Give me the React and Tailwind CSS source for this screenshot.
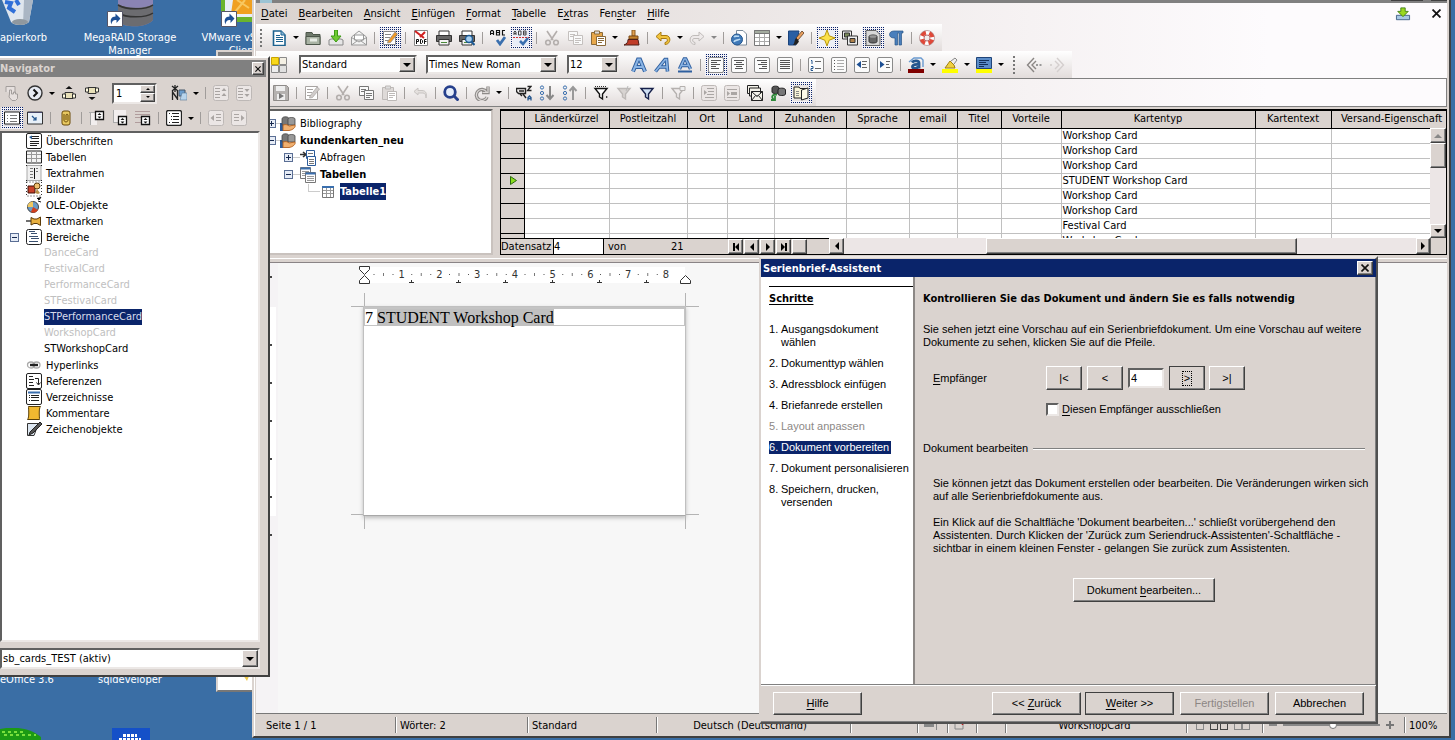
import React from "react";

const RAISED =
  "border border-t-white border-l-white border-r-[#404040] border-b-[#404040] bg-[#dad3cf] shadow-[inset_-1px_-1px_0_#808080]";
const SUNKEN =
  "border-2 border-t-[#606060] border-l-[#606060] border-r-[#ece8e6] border-b-[#ece8e6] bg-white";

/* ---------- icons ---------- */

const box = <rect x=".5" y=".5" width="15" height="15" rx="1.5" fill="#fbfbfb" stroke="#8a8a8a" />;
const boxDim = <rect x=".5" y=".5" width="15" height="15" rx="2" fill="#ebe6e5" stroke="#bdb8b6" />;
const lines = (color, rows) =>
  rows.map(([x1, x2, y], i) => <path key={i} d={`M${x1} ${y}.5H${x2}`} stroke={color} />);
const scissors = (c) => (
  <g fill="none" stroke={c} strokeWidth="1.6">
    <path d="M3 1l6 9M13 1L7 10" />
    <circle cx="4" cy="12.500" r="2.300" />
    <circle cx="12" cy="12.500" r="2.300" />
  </g>
);
const copy = (c) => (
  <g fill="#fafafa" stroke={c}>
    <path d="M1.500 1.500h9v9h-9z" />
    <path d="M3 4.500h5M3 6.500h4" />
    <path d="M6.500 5.500h9v9h-9z" />
    <path d="M8 8.500h6M8 10.500h6M8 12.500h4" />
  </g>
);
const funnel = (fill, stroke) => <path d="M2 3.500h12L9.500 9v5l-3-2V9z" fill={fill} stroke={stroke} strokeWidth="1.400" />;
const pageWithPencil = (c, p) => (
  <g>
    <path d="M1.500 1.500h12v13h-12z" fill="#fff" stroke={c} />
    {lines(c, [[3, 9, 4], [3, 8, 7], [3, 7, 10]])}
    <path d="M6 11l7-9 2.500 2-7 8.500L5.500 13z" fill={p} stroke={c} strokeWidth=".7" />
  </g>
);
const printer = (
  <g>
    <path d="M3 1h10v5H3z" fill="#fff" stroke="#333" />
    <path d="M.5 5.500h15v6H.5z" fill="#666" stroke="#333" />
    <path d="M3 9.500h10v5.500H3z" fill="#f4f4f4" stroke="#333" />
    <path d="M5 12.500h6" stroke="#4a8a3a" />
  </g>
);
const letterA = (extra) => (
  <g fill="none" stroke="#2f5f9f">
    {extra}
  </g>
);
const clipboard = (body, c) => (
  <g>
    <path d="M1.500 2.500h11v12h-11z" fill={body} stroke={c} />
    <path d="M4.500 1h5v3h-5z" fill="#ddd" stroke={c} />
    <path d="M6.500 6.500h9v9h-9z" fill="#fff" stroke={c} />
    {lines(c, [[8, 14, 8], [8, 14, 10], [8, 12, 12]])}
  </g>
);
const handBase = (
  <g>
    <path d="M0 7h3v8H0z" fill="#2d5c9a" />
    <path d="M2 3c0-3 7-3 7 0v6H2z" fill="#777" stroke="#444" strokeWidth=".8" />
    <path d="M8 3c0-2 7-2 7 0v6H8z" fill="#999" stroke="#444" strokeWidth=".8" />
    <path d="M3 9c3-1 5 0 6 1l6-1c1 2-2 5-6 5.500H3z" fill="#f0b070" stroke="#b06020" strokeWidth=".9" />
  </g>
);

const ICONS = {
  newDoc: (
    <g>
      <path d="M2.500 1H10l4 4v10.500H2.500z" fill="#fff" stroke="#1d6390" strokeWidth="1.600" />
      <path d="M10 1v4h4" fill="#88b8d8" stroke="#1d6390" />
      {lines("#1d6390", [[5, 9, 5], [5, 12, 7], [5, 12, 9], [5, 12, 11]])}
    </g>
  ),
  open: (
    <g>
      <path d="M1 2.500h6l1 2h7v10H1z" fill="#6f7a6c" stroke="#4c564a" />
      <path d="M1 6.500h14v8H1z" fill="#a9b3a4" stroke="#4c564a" />
      <path d="M5 8.500h7v3H5z" fill="#e8ece6" />
    </g>
  ),
  save: (
    <g>
      <path d="M1 10v5h14v-5l-2-1H3z" fill="#e6e6e6" stroke="#888" />
      <path d="M6.500 0h3v6H13l-5 6-5-6h3.500z" fill="#6fca32" stroke="#3d9a16" />
    </g>
  ),
  mail: (
    <g fill="#f2f2f2" stroke="#9a9a9a">
      <path d="M.5 7L8 1l7.500 6v8H.5z" />
      <path d="M3.500 5h9v5h-9z" fill="#fff" />
      <path d="M.5 7.500L8 12l7.500-4.500M.5 15L6 11M15.500 15L10 11" fill="none" />
    </g>
  ),
  edit: pageWithPencil("#888", "#f09a28"),
  editDim: pageWithPencil("#a8a4a2", "#d0ccca"),
  pdf: (
    <g>
      <path d="M1.500.5h13v15h-13z" fill="#fff" stroke="#888" />
      <path d="M2 1l9 7M12 2L7 7" stroke="#d02020" strokeWidth="2" />
      <path d="M3.500 14V9.500h2v2h-2M7.500 9.500h1l1 1v2l-1 1h-1zM11.500 14V9.500h2M11.500 11.500h2" fill="none" stroke="#111" />
    </g>
  ),
  print: printer,
  preview: (
    <g>
      {printer}
      <circle cx="10" cy="9" r="3.500" fill="#a8d0f0" stroke="#1d5a94" strokeWidth="1.400" />
      <path d="M12.500 11.500L15.500 15" stroke="#1d5a94" strokeWidth="2" />
    </g>
  ),
  abc: (
    <g fill="none">
      <path d="M.5 5V1.500l1-1h1l1 1V5M.5 3.500h3M6.500.5V5h3V.5zM6.500 2.500h3M15 .5h-2.500V5H15" stroke="#111" strokeWidth="1.200" />
      <path d="M7 10l3 4 5-7" stroke="#3a6fae" strokeWidth="2.800" />
    </g>
  ),
  abcAuto: (
    <g fill="none">
      <rect width="16" height="16" fill="#e9edf7" />
      <path d="M1 5V2l1-1 1 1v3M1 3.500h2M5.500 1v4h2.500V1zM10.500 1v4H13V1zM10.500 3H13" stroke="#444" />
      <path d="M0 7.500h16" stroke="#d03030" strokeDasharray="2 1" />
      <path d="M7 11l3 3 5-6" stroke="#3a6fae" strokeWidth="2.600" />
    </g>
  ),
  cut: scissors("#b3aeac"),
  copyDim: copy("#c4c0be"),
  copy: copy("#777"),
  paste: clipboard("#e8a84a", "#8a6a3a"),
  pasteDim: clipboard("#dedad8", "#bdb9b7"),
  brush: (
    <g>
      <path d="M8 0h3v6H8z" fill="#e0a050" stroke="#8a5a20" />
      <path d="M5 6h9v3H5z" fill="#c8842c" stroke="#7a4a18" />
      <path d="M4 9.500h10L15 15H0c3-1 4-3 4-5.500z" fill="#c03c28" stroke="#502018" />
    </g>
  ),
  undo: <path d="M6 2L1 6.500 6 11V8.500h5c2 0 2 4-1 4v2c6 0 6.500-9 1-9H6z" fill="#f2c43c" stroke="#a87a10" />,
  redo: <path d="M10 2l5 4.500-5 4.500V8.500H5c-2 0-2 4 1 4v2c-6 0-6.500-9-1-9h5z" fill="#eeeaea" stroke="#c0bcba" />,
  undoDim: <path d="M6 3L2 6.500 6 10V8h5c2 0 3 2 3 5 1-4 0-7.500-4-7.500H6z" fill="#e4e0de" stroke="#c8c4c2" />,
  link: (
    <g>
      <path d="M5.500.5H12L15.500 4v11h-10z" fill="#fff" stroke="#7a8a9a" />
      <circle cx="6" cy="9.500" r="5.500" fill="#3f79b8" stroke="#24568e" />
      <path d="M3 7c2-2 3 0 5-1M3 12c1-3 4-1 6-3" stroke="#bcdcf4" strokeWidth="1.600" fill="none" />
    </g>
  ),
  table: (
    <g>
      <path d="M.5.5h15v15H.5z" fill="#fff" stroke="#777" />
      <path d="M.5.5h15v3H.5z" fill="#a4aca0" stroke="#777" />
      <path d="M1 7.500h14M1 11.500h14M5.500 4v11M10.500 4v11" stroke="#aaa" />
    </g>
  ),
  draw: (
    <g>
      <path d="M.5 1H11L8 15H.5z" fill="#2a5fa4" stroke="#1c447c" />
      <path d="M14 1l2 2-6 7-2-2z" fill="#e8a060" stroke="#5a3a20" strokeWidth=".8" />
      <path d="M8 8l3 3c-1 3-3 4-6 4 2-2 1-5 3-7z" fill="#222" />
    </g>
  ),
  star: (
    <g>
      <rect width="16" height="16" fill="#eef0f6" />
      <path d="M8 0l2.200 5.800L16 8l-5.800 2.200L8 16l-2.200-5.800L0 8l5.800-2.200z" fill="#fbe14a" stroke="#b8960c" />
    </g>
  ),
  gallery: (
    <g stroke="#333">
      <path d="M.5 1h9v8h-9z" fill="#eee" />
      <path d="M2.500 3h5v4h-5z" fill="#7a8a5a" />
      <path d="M5.500 6h10v9h-10z" fill="#eee" />
      <path d="M8 8.500h5v4H8z" fill="#b0824a" />
    </g>
  ),
  dataSrc: (
    <g>
      <path d="M1 .5h10l4 4v11H1z" fill="#d8d8d8" stroke="#666" />
      <path d="M4 6.500c0-2 8-2 8 0v5c0 2-8 2-8 0z" fill="#666" stroke="#333" />
      <ellipse cx="8" cy="6.500" rx="3.500" ry="1.300" fill="#999" />
    </g>
  ),
  pilcrow: <path d="M15 1H6C0 1 0 8 6 8h1v7h2.500V3H11v12h2.500V3H15z" fill="#4a7fbc" stroke="#2a5688" strokeWidth=".7" />,
  help: (
    <g fill="none">
      <circle cx="8" cy="8" r="5.500" stroke="#fff" strokeWidth="4.500" />
      <circle cx="8" cy="8" r="5.500" stroke="#e04838" strokeWidth="4" strokeDasharray="5 3.640" strokeDashoffset="-1.800" />
      <circle cx="8" cy="8" r="7.500" stroke="#a88080" strokeWidth=".7" />
      <circle cx="8" cy="8" r="3" stroke="#a85050" strokeWidth=".8" />
    </g>
  ),
  styles: (
    <g stroke="#8a8a8a">
      <path d="M.5.500h7v7h-7z" fill="#f8d81c" stroke="#c8a400" />
      <path d="M8.500.500h7v7h-7z" fill="#f4f0e4" />
      <path d="M.5 8.500h7v7h-7z" fill="#eee" />
      <path d="M8.500 8.500h7v7h-7z" fill="#e0e0e0" />
    </g>
  ),
  bold: letterA(
    <g>
      <path d="M2 14.500L7 2.500h2l5 12M4.500 10h7" strokeWidth="4" />
      <path d="M2 14.500L7 2.500h2l5 12M4.500 10h7" stroke="#8ab4e4" strokeWidth="2" />
    </g>,
  ),
  italic: letterA(
    <g>
      <path d="M1.500 14.500L11 2.500h1.500l1 12M5 10h8" strokeWidth="3.600" />
      <path d="M1.500 14.500L11 2.500h1.500l1 12M5 10h8" stroke="#8ab4e4" strokeWidth="1.700" />
    </g>,
  ),
  underline: letterA(
    <g>
      <path d="M2.500 12L7.200 2h1.600l4.700 10M4.500 8.500h7" strokeWidth="3.400" />
      <path d="M2.500 12L7.200 2h1.600l4.700 10M4.500 8.500h7" stroke="#8ab4e4" strokeWidth="1.600" />
      <path d="M1 14.500h14" strokeWidth="2" />
    </g>,
  ),
  alignL: <g>{box}{lines("#555", [[3, 13, 3], [3, 9, 5], [3, 12, 7], [3, 8, 9], [3, 11, 11]])}</g>,
  alignC: <g>{box}{lines("#555", [[3, 13, 3], [5, 11, 5], [3, 13, 7], [5, 11, 9], [4, 12, 11]])}</g>,
  alignR: <g>{box}{lines("#555", [[3, 13, 3], [7, 13, 5], [4, 13, 7], [8, 13, 9], [5, 13, 11]])}</g>,
  alignJ: <g>{box}{lines("#555", [[3, 13, 3], [3, 13, 5], [3, 13, 7], [3, 13, 9], [3, 13, 11]])}</g>,
  numList: <g>{box}{lines("#666", [[7, 13, 4], [7, 13, 11]])}<path d="M3 3.500h1V7M3 9.500h2v2H3v2h2" fill="none" stroke="#24568e" /></g>,
  bulList: <g>{box}{lines("#aaa", [[6, 13, 3], [6, 13, 6], [6, 13, 9], [6, 13, 12]])}{lines("#555", [[3, 4, 3], [3, 4, 6], [3, 4, 9], [3, 4, 12]])}</g>,
  outdent: <g>{box}<path d="M7 4v7L2.500 7.500z" fill="#1d4f94" />{lines("#666", [[8, 13, 4], [8, 12, 7], [8, 13, 10]])}</g>,
  indent: <g>{box}<path d="M3 4v7l4.500-3.500z" fill="#1d4f94" />{lines("#666", [[9, 13, 4], [9, 12, 7], [9, 13, 10]])}</g>,
  fontColor: (
    <g>
      <path d="M4 5.500C6 3 11 3.500 11 6v5.500M11 7.500C5 7 3.500 9 5 11c2 1 5 0 6-2" fill="none" stroke="#24568e" strokeWidth="2.800" />
      <path d="M1 5L6 1h7l2 2v7" fill="none" stroke="#6a9ad0" strokeWidth="1.400" />
      <path d="M0 12h16v4H0z" fill="#800000" />
    </g>
  ),
  highlight: (
    <g>
      <path d="M3 11l5-7 4 4 1 3z" fill="#f0d040" stroke="#a08010" />
      <path d="M9 4l4-3 2 2-3 4" fill="#eee" stroke="#888" />
      <path d="M0 12h16v4H0z" fill="#ffff00" />
    </g>
  ),
  paraColor: (
    <g>
      <path d="M.5.5h15v11H.5z" fill="#5a8cc8" stroke="#1f4478" />
      {lines("#10305c", [[3, 13, 3], [3, 10, 5], [3, 12, 7], [3, 8, 9]])}
      <path d="M0 12h16v4H0z" fill="#ffff00" />
    </g>
  ),
  back: <g><path d="M8 1L1.500 8 8 15M10 4L6 8l4 4" fill="none" stroke="#8a8684" strokeWidth="1.400" /><path d="M10 7h2v2h-2zM13.500 7h2v2h-2z" fill="#999" /></g>,
  fwd: <g><path d="M8 1l6.500 7L8 15M6 4l4 4-4 4" fill="none" stroke="#d4cfce" strokeWidth="1.400" /><path d="M1 7h2v2H1z" fill="#d8d4d2" /></g>,
  diskDim: (
    <g>
      <path d="M.5.5h13l2 2v13H.5z" fill="#b5b2b0" stroke="#8e8b89" />
      <path d="M3 1h9v5H3zM4 9h8v6H4z" fill="#eee" />
      <path d="M6 8l5 3-5 3z" fill="#777" />
    </g>
  ),
  find: (
    <g fill="none">
      <circle cx="7" cy="7" r="5.300" fill="#e6eefa" stroke="#26408c" strokeWidth="2.800" />
      <path d="M11 11l4.500 4.500" stroke="#26408c" strokeWidth="3" />
    </g>
  ),
  refresh: (
    <g fill="none">
      <path d="M14 1.500v6H8M12.500 7A5.500 5.500 0 1 0 13 12" stroke="#8e8b89" strokeWidth="3.400" />
      <path d="M14 2v5.500H8.500M12.500 7A5.500 5.500 0 1 0 13 12" stroke="#dedad8" strokeWidth="1.200" />
    </g>
  ),
  sort: (
    <g fill="none" stroke="#222">
      <path d="M.5 3.500h9v5h-7l-2-2zM3 6h5M7 9l3 4M4 9l2 2" strokeWidth="1.400" />
      <path d="M11.500 1.500h3.500l-3.500 4h4" strokeWidth="1.300" />
      <path d="M12 15.500v-3l1.500-1.500 1.500 1.500v3M12 13.500h3" stroke="#24568e" strokeWidth="1.300" />
    </g>
  ),
  sortAsc: <g fill="none"><circle cx="3" cy="2.500" r="1.600" stroke="#3a6fae" /><circle cx="3" cy="8" r="1.600" stroke="#3a6fae" /><circle cx="3" cy="13.500" r="1.600" stroke="#3a6fae" /><path d="M11 1v12M7.500 10l3.500 4 3.500-4" stroke="#888" strokeWidth="2" /></g>,
  sortDesc: <g fill="none"><circle cx="3" cy="2.500" r="1.600" stroke="#3a6fae" /><circle cx="3" cy="8" r="1.600" stroke="#3a6fae" /><circle cx="3" cy="13.500" r="1.600" stroke="#3a6fae" /><path d="M11 15V3M7.500 6L11 2l3.500 4" stroke="#999" strokeWidth="2" /></g>,
  autoFilter: <g>{funnel("#fff", "#111")}<path d="M2 1.500h11" stroke="#333" strokeDasharray="1 1" /><path d="M13 11l2 1-2 1z" fill="#111" /></g>,
  applyFilter: <g>{funnel("#d8d4d2", "#bdb9b7")}<path d="M12 1l-2 5" stroke="#bbb" /></g>,
  stdFilter: funnel("#cfe0f4", "#16204a"),
  noFilter: <g>{funnel("#f2eeee", "#b5b1af")}<path d="M10 1.500h5v4h-5z" fill="#eee" stroke="#b5b1af" /></g>,
  dataText: <g>{boxDim}{lines("#aaa6a4", [[6, 13, 3], [7, 13, 6], [6, 13, 9], [4, 13, 12]])}<path d="M3 5l3 2.500L3 10z" fill="#aaa6a4" /></g>,
  dataField: <g>{boxDim}{lines("#aaa6a4", [[3, 13, 4], [3, 13, 12]])}<path d="M3 6l3 2.500L3 11zM7 7h6v3H7z" fill="#aaa6a4" /></g>,
  mailMerge: (
    <g fill="#f5f3ea" stroke="#222">
      <path d="M.5.5h11v8H.500z" />
      <path d="M2.500 3h11v8h-11z" />
      <path d="M4.500 6.500h11v9h-11zM4.500 6.500l5.500 5 5.500-5M4.500 15.500l4-5M15.500 15.500l-4-5" />
    </g>
  ),
  docSource: (
    <g>
      <path d="M2 3c0-2.500 7-2.500 7 0v4c0 2-7 2-7 0z" fill="#555" stroke="#222" />
      <path d="M8 5c0-2.500 7.500-2.500 7.500 0v4c0 2-7.500 2-7.500 0z" fill="#777" stroke="#222" />
      <path d="M7 9.500c-5 0-6 2-3.500 5M1 15h4v-4" fill="none" stroke="#2f8a3a" strokeWidth="1.800" />
    </g>
  ),
  explorer: (
    <g>
      <rect width="16" height="16" fill="#e8e4e2" />
      <path d="M1 2h5l1 1.500h7V13H1z" fill="#f8f4d8" stroke="#222" />
      <path d="M8.500 5l6.500-2v10l-6.500 2z" fill="#fffbe8" stroke="#222" />
      {lines("#888", [[3, 6, 6], [3, 6, 8], [3, 6, 10]])}
    </g>
  ),
  hand: <path d="M2 7V1.500h9V8M5.500 9V5h2v4h2V7h2v2h2v4.500l-2 2H8L5 12z" fill="#e6e0de" stroke="#a39e9c" />,
  navCircle: <g><circle cx="8" cy="8" r="7" fill="#e6eaf2" stroke="#333" strokeWidth="1.400" /><path d="M6.500 4.500L10 8l-3.500 3.500" fill="none" stroke="#111" strokeWidth="2" /></g>,
  prev: <g><path d="M4.500 4L8 1l3.500 3z" fill="#111" /><path d="M4 7.500h8v6H4z" fill="#e8e0b8" stroke="#333" /><path d="M1.500 9h3v4h-3zM11.500 9h3v4h-3z" fill="#fffbe0" stroke="#333" /></g>,
  next: <g><path d="M4.500 12L8 15l3.500-3z" fill="#111" /><path d="M4 2.500h8v6H4z" fill="#e8e0b8" stroke="#333" /><path d="M1.500 3h3v4h-3zM11.500 3h3v4h-3z" fill="#fffbe0" stroke="#333" /></g>,
  drag: (
    <g>
      <path d="M1.500 6v9M6.500 6v9M1.500 7l5 7M1 1l6 5M7 1L1 6M4 0v7" stroke="#222" strokeWidth="1.300" />
      <path d="M8 5h6v6H8z" fill="#6a9ccc" stroke="#456" />
      <path d="M11 8h5v7h-7z" fill="#b8d4ec" stroke="#579" strokeWidth=".6" />
    </g>
  ),
  levelUp: <g>{boxDim}{lines("#a8a3a1", [[2, 7, 3], [2, 7, 6], [2, 7, 9], [2, 7, 12]])}<path d="M8.500 6h5L11 3zM8.500 11h5L11 8z" fill="#a8a3a1" /></g>,
  levelDown: <g>{boxDim}{lines("#a8a3a1", [[2, 7, 3], [2, 7, 6], [2, 7, 9], [2, 7, 12]])}<path d="M8.500 4h5L11 7zM8.500 9h5L11 12z" fill="#a8a3a1" /></g>,
  listBox: <g><rect width="16" height="16" fill="#dad8dc" /><path d="M.5 2h15v12H.5z" fill="#fff" stroke="#222" />{lines("#777", [[3, 4, 5], [6, 13, 5], [3, 4, 8], [6, 13, 8], [3, 4, 11], [6, 13, 11]])}</g>,
  content: <g><path d="M.5 2h15v12H.5z" fill="#e8f0f8" stroke="#333" /><path d="M1 2.500h14" stroke="#446" /><path d="M5 6l4 4M9 7v3H6" fill="none" stroke="#24568e" strokeWidth="1.200" /></g>,
  reminder: <g><rect x="4" y="1" width="8" height="14" rx="2" fill="#e8c860" stroke="#6a4a08" /><path d="M6 4v6c0 2.500 4 2.500 4 0V5c0-1-2-1-2 0v5" fill="none" stroke="#6a4a08" /></g>,
  header: <g><path d="M1 3h7v12H1z" fill="#f2eeee" /><path d="M0 2.500h8M1.500 3v12" stroke="#aaa" /><path d="M6.500 1.500h8v8h-8z" fill="#fff" stroke="#111" strokeWidth="1.300" /><path d="M8.500 5h4L10.500 3zM8.500 6.500h4l-2 2z" fill="#111" /></g>,
  footer: <g><path d="M1 0h13v12H1z" fill="#f2eeee" /><path d="M1.500 0v12M1 12.500h6" stroke="#aaa" /><path d="M6.500 6.500h8v8h-8z" fill="#fff" stroke="#111" strokeWidth="1.300" /><path d="M8.500 10h4l-2-2zM8.500 11.500h4l-2 2z" fill="#111" /></g>,
  anchor: <g>{lines("#b09c9c", [[0, 15, 1], [0, 15, 4], [0, 6, 7], [0, 6, 12]])}<path d="M6.500 6.500h8v8h-8z" fill="#fff" stroke="#111" strokeWidth="1.300" /><path d="M8.500 10h4l-2-2zM8.500 11.500h4l-2 2z" fill="#111" /></g>,
  headings: <g><rect x=".5" y=".5" width="15" height="15" rx="2" fill="#fff" stroke="#222" strokeWidth="1.300" />{lines("#222", [[3, 4, 3], [6, 13, 3], [5, 6, 6], [7, 13, 6], [5, 6, 9], [7, 13, 9], [3, 4, 12], [6, 13, 12]])}</g>,
  promote: <g>{boxDim}<path d="M6 5v6L2.500 8z" fill="#aaa5a3" />{lines("#aaa5a3", [[8, 13, 4], [8, 13, 7], [8, 13, 10]])}</g>,
  demote: <g>{boxDim}<path d="M10 5v6l3.500-3z" fill="#aaa5a3" />{lines("#aaa5a3", [[3, 8, 4], [3, 8, 7], [3, 8, 10]])}</g>,
  tHeading: <g><rect x=".5" y=".5" width="15" height="15" rx="1.500" fill="#fff" stroke="#222" /><path d="M3 4l3-1.500v4z" fill="#24568e" />{lines("#222", [[6, 13, 3], [6, 13, 5], [4, 13, 8], [4, 13, 10], [4, 11, 12]])}</g>,
  tTable: <g><path d="M.5 2h15v12H.5z" fill="#f4f4f4" stroke="#222" /><path d="M1 5.500h14M1 9.500h14M5.500 2v12M10.500 2v12" stroke="#999" /></g>,
  tFrame: <g><path d="M1 .5h14v15H1z" fill="#f0f0f0" stroke="#aaa" />{lines("#777", [[4, 7, 3], [4, 7, 6], [4, 7, 9], [4, 7, 12], [10, 12, 3], [10, 12, 6]])}<path d="M8.500 3v11" stroke="#111" /><path d="M0 0h1v1H0zM15 0h1v1h-1zM0 15h1v1H0zM15 15h1v1h-1z" fill="#222" /></g>,
  tImage: <g><path d="M.5 1h15v14H.5z" fill="#fff" stroke="#333" strokeDasharray="1 2" /><path d="M2 5h7v7H2z" fill="#c84028" stroke="#401008" /><circle cx="11" cy="5" r="3" fill="#f0c070" stroke="#604010" /><path d="M11 8l3 4-2 1-3-1z" fill="#b89048" /></g>,
  tOle: <g><circle cx="7" cy="10" r="5.500" fill="#6a9cc8" stroke="#444" /><path d="M7 10V4.500A5.500 5.500 0 0 0 1.500 10z" fill="#f0c860" /><path d="M7 10l5 3a5.500 5.500 0 0 1-7 2z" fill="#d04020" /><path d="M11 1l2 2 2-3M12 4l3 1" stroke="#111" /></g>,
  tPin: <g><path d="M0 8h6" stroke="#333" strokeWidth="1.400" /><path d="M5 4.500l3 1.500h3l3.500-2v8.500l-3.500-2H8L5 12z" fill="#e8b040" stroke="#5a3a08" /></g>,
  tSection: <g><rect x=".5" y=".5" width="15" height="15" rx="2" fill="#fff" stroke="#222" />{lines("#3a5070", [[3, 9, 2], [5, 11, 4], [3, 12, 7], [5, 13, 9], [3, 12, 12]])}</g>,
  tLink: <g fill="none" stroke="#aaa" strokeWidth="1.300"><ellipse cx="5" cy="8" rx="3.500" ry="3" /><ellipse cx="10.500" cy="8" rx="3.500" ry="3" /><path d="M4 8h8" stroke="#222" strokeWidth="2.400" /></g>,
  tRef: <g><rect x=".5" y=".5" width="15" height="15" rx="1.500" fill="#fff" stroke="#222" />{lines("#222", [[3, 7, 3], [3, 8, 6], [3, 7, 9], [3, 8, 12]])}<path d="M9 5.500h3.500v6M10.500 9.500l2 2.500 2-2.500" fill="none" stroke="#222" /></g>,
  tIndex: <g><rect x=".5" y=".5" width="15" height="15" rx="1.500" fill="#fff" stroke="#222" /><path d="M2 3.500h12" stroke="#3a6fae" strokeWidth="2" />{lines("#222", [[3, 4, 6], [5, 13, 6], [3, 4, 8], [5, 13, 8], [3, 4, 11], [5, 13, 11]])}</g>,
  tNote: <g><path d="M2.500 1.500h12c-2 2-1 11-1 13h-12c2-2 1-11 1-13z" fill="#f0b830" stroke="#5a4008" /></g>,
  tDraw: <g><path d="M1.500 2.500h11L8 14.500H1.500z" fill="#dce6f0" stroke="#333" /><path d="M14 1l2 2-9 9-4 2 1-3z" fill="#555" stroke="#222" /></g>,
  base: handBase,
  queries: <g><path d="M0 4.500h5M3 2l3 2.500L3 7" stroke="#333" strokeWidth="1.600" fill="none" /><path d="M6.500.5h8v8h-8z" fill="#fff" stroke="#2d5c9a" /><path d="M7.500 6.500h8v9h-8z" fill="#fff" stroke="#2d5c9a" />{lines("#777", [[8, 13, 3], [9, 14, 9], [9, 14, 11], [9, 14, 13]])}</g>,
  tables: <g><path d="M.5.500h10v11H.5z" fill="#fff" stroke="#777" /><path d="M.5 1.500h10" stroke="#3a6fae" strokeWidth="2" />{lines("#999", [[2, 9, 4], [2, 9, 6], [2, 9, 8]])}<path d="M5.500 5.500h10v10h-10z" fill="#fff" stroke="#777" /><path d="M5.500 6.500h10" stroke="#3a6fae" strokeWidth="2" />{lines("#999", [[7, 14, 9], [7, 14, 11], [7, 14, 13]])}</g>,
  tbl: <g><path d="M2.500 2.500h11v11h-11z" fill="#fff" stroke="#777" /><path d="M2 3h12" stroke="#3a6fae" strokeWidth="2" /><path d="M3 6.500h10M3 9.500h10M6.500 4v9M10.500 4v9" stroke="#999" /></g>,
  update: <g><path d="M.5 9.500h15v5H.5z" fill="#a8c8e4" stroke="#3a5a80" /><path d="M5.500 1h5v4H14l-6 6-6-6h3.500z" fill="#9ad820" stroke="#3a7a10" /></g>,
};

const Icon = ({ name, className = "size-4" }) => (
  <svg viewBox="0 0 16 16" className={`block shrink-0 ${className}`} aria-hidden="true">
    {ICONS[name]}
  </svg>
);

const Triangle = ({ dir = "down", className = "fill-black", size = "h-1 w-2" }) => {
  const d = { down: "M0 0h8L4 4z", up: "M0 4h8L4 0z", left: "M4 0v8L0 4z", right: "M0 0v8l4-4z" }[dir];
  const vertical = dir === "left" || dir === "right";
  return (
    <svg viewBox={vertical ? "0 0 4 8" : "0 0 8 4"} className={`block shrink-0 ${vertical ? "h-2 w-1" : size} ${className}`} aria-hidden="true">
      <path d={d} />
    </svg>
  );
};

/* ---------- toolbar pieces ---------- */

/* Item grammar: "|" separator, "v" drop-down arrow, "V" dimmed arrow, ":" grip, "*name" pressed icon. */
const Tools = ({ items }) =>
  items.map((item, i) => {
    if (item === "|")
      return (
        <span key={i} className="flex w-2 shrink-0 justify-center">
          <span className="h-3 w-px bg-[#a09c9a]" />
        </span>
      );
    if (item === "v" || item === "V")
      return (
        <button key={i} aria-label="Mehr" className="flex h-[22px] w-[11px] shrink-0 items-center justify-center">
          <Triangle size="h-[3px] w-[6px]" className={item === "v" ? "fill-black" : "fill-[#888]"} />
        </button>
      );
    if (item === ":")
      return (
        <span key={i} className="flex w-4 shrink-0 justify-center">
          <span className="h-[18px] border-l-2 border-dotted border-[#777]" />
        </span>
      );
    const pressed = item[0] === "*";
    const name = pressed ? item.slice(1) : item;
    return (
      <button key={i} aria-label={name} aria-pressed={pressed} className="flex h-[22px] w-[23px] shrink-0 items-center justify-center">
        <span
          className={
            pressed
              ? "flex size-[22px] items-center justify-center bg-[conic-gradient(#0a246a_25%,#f4f2f6_0)] bg-[length:2px_2px]"
              : ""
          }
        >
          <Icon name={name} />
        </span>
      </button>
    );
  });

const Combo = ({ label, value, className }) => (
  <div className={`relative shrink-0 ${SUNKEN} ${className}`}>
    <select aria-label={label} defaultValue={value} className="block h-full w-full appearance-none bg-transparent pl-px pr-4 outline-none">
      <option>{value}</option>
    </select>
    <span className={`pointer-events-none absolute inset-y-0 right-0 flex w-4 items-center justify-center ${RAISED}`}>
      <Triangle />
    </span>
  </div>
);

const Key = ({ text, k }) => {
  const i = text.indexOf(k);
  return (
    <span>
      {text.slice(0, i)}
      <span className="underline underline-offset-2">{k}</span>
      {text.slice(i + 1)}
    </span>
  );
};

const CloseX = ({ className = "size-2" }) => (
  <svg viewBox="0 0 8 8" className={`block ${className}`} aria-hidden="true">
    <path d="M.5.500l7 7M7.500.500l-7 7" stroke="#111" strokeWidth="1.600" />
  </svg>
);

/* ---------- desktop ---------- */

const DesktopLabel = ({ children, className = "w-[100px] text-center" }) => (
  <div className={`absolute whitespace-nowrap leading-[13px] text-white ${className}`}>{children}</div>
);

const ShortcutArrow = () => (
  <g>
    <path d="M0 0h15v15H0z" fill="#fff" stroke="#556" />
    <path d="M4 13C2 8 4 5 8 5V2l5 5-4 4.500V8.500C6 8 4 10 4 13z" fill="#1d4f94" />
  </g>
);

const Desktop = () => (
  <>
    <svg className="absolute left-0 top-0 h-[27px] w-[34px]" viewBox="0 0 34 27" aria-hidden="true">
      <path d="M2 0h31l-4 22c-4 4-15 4-18 0z" fill="#dfe6ee" />
      <path d="M24 0h9l-4 22-6 3z" fill="#aab6c4" />
      <path d="M5 2l6 1-2 5 6 4M16 0l3 5" stroke="#2f6fd8" strokeWidth="4" fill="none" />
      <ellipse cx="20" cy="22" rx="8" ry="3" fill="#8f989f" />
    </svg>
    <DesktopLabel className="left-0 top-[31px]">apierkorb</DesktopLabel>
    <svg className="absolute left-[106px] top-0 h-[28px] w-[48px]" viewBox="0 0 48 28" aria-hidden="true">
      <path d="M12 0h35v20c-6 8-28 8-35 2z" fill="#8a84b4" />
      <path d="M12 4c8 5 28 5 35 0v16c-6 8-28 8-35 2z" fill="#6c6c70" />
      <path d="M12 5c8 5 28 5 35 0M12 13c8 5 28 5 35 0" stroke="#333" fill="none" strokeWidth="1.500" />
      <g transform="translate(1.500 11.500)"><ShortcutArrow /></g>
    </svg>
    <DesktopLabel className="left-20 top-[31px] w-[100px] text-center">
      MegaRAID Storage
      <br />
      Manager
    </DesktopLabel>
    <svg className="absolute left-[221px] top-0 h-[28px] w-[34px]" viewBox="0 0 34 28" aria-hidden="true">
      <path d="M0 0h34v22H0z" fill="#6ab42c" />
      <path d="M4 0h30v17H4z" fill="#e8eef4" />
      <path d="M12 0h22v14H10z" fill="#f0a020" />
      <path d="M16 0l12 8M24 0L14 12" stroke="#f8c860" strokeWidth="2" />
      <g transform="translate(.500 11.500)"><ShortcutArrow /></g>
    </svg>
    <DesktopLabel className="left-[193px] top-[31px] w-[100px] text-center">
      VMware vSphere
      <br />
      Client
    </DesktopLabel>
    <div className="absolute bottom-12 left-[216px] top-[50px] flex w-[60px] flex-col border-2 border-[#dad3cf] border-b-[#777] bg-white">
      <div className="h-3 bg-[#808080]" />
      <div className="mt-auto flex justify-center pb-2">
        <svg viewBox="0 0 10 16" className="h-4 w-2.5" aria-hidden="true"><path d="M2 0h6v10l-2 5-4-6z" fill="#f0cc50" /></svg>
      </div>
    </div>
    <DesktopLabel className="left-0 top-[673px]">eOffice 3.6</DesktopLabel>
    <DesktopLabel className="left-20 top-[673px] w-[100px] text-center">sqldeveloper</DesktopLabel>
    <svg className="absolute bottom-0 left-0 h-3 w-[42px]" viewBox="0 0 42 12" aria-hidden="true">
      <path d="M0 1c14-3 30-1 41 8v3H0z" fill="#1c9a14" />
      <path d="M2 4h24M4 7h32" stroke="#7ae03c" strokeDasharray="3 3" strokeWidth="2" />
    </svg>
    <svg className="absolute bottom-0 left-28 h-3 w-[38px]" viewBox="0 0 38 12" aria-hidden="true">
      <path d="M0 0h38v12H0z" fill="#1450c8" />
      <path d="M11 7.500h14M7 11.500h22" stroke="#fff" strokeWidth="3" strokeDasharray="3 1" />
    </svg>
  </>
);

/* ---------- writer window ---------- */

const MENUS = [
  ["Datei", "D"], ["Bearbeiten", "B"], ["Ansicht", "A"], ["Einfügen", "E"], ["Format", "F"],
  ["Tabelle", "T"], ["Extras", "x"], ["Fenster", "s"], ["Hilfe", "H"],
];

const TB_STANDARD = [
  "newDoc", "v", "open", "save", "mail", "|", "*edit", "|", "pdf", "print", "preview", "|", "abc", "*abcAuto", "|",
  "cut", "copyDim", "paste", "v", "brush", "|", "undo", "v", "redo", "V", "|", "link", "table", "v", "draw", "|",
  "*star", "gallery", "*dataSrc", "pilcrow", "|", "help",
];
const TB_FORMAT = [
  "bold", "italic", "underline", "|", "*alignL", "alignC", "alignR", "alignJ", "|", "numList", "bulList", "outdent",
  "indent", "|", "fontColor", "v", "highlight", "v", "paraColor", "v", ":", "back", "fwd",
];
const TB_DATA = [
  "diskDim", "|", "editDim", "|", "cut", "copy", "pasteDim", "|", "undoDim", "|", "find", "|", "refresh", "v", "|",
  "sort", "sortAsc", "sortDesc", "|", "autoFilter", "applyFilter", "stdFilter", "|", "noFilter", "|", "dataText",
  "dataField", "mailMerge", "docSource", "*explorer",
];

const TOOLBAR = "flex h-[27px] w-max items-center bg-linear-to-b from-white to-[#e2dcdb]";

const COLUMNS = [
  ["Länderkürzel", "w-[85px]"], ["Postleitzahl", "w-[78px]"], ["Ort", "w-10"], ["Land", "w-[47px]"],
  ["Zuhanden", "w-[72px]"], ["Sprache", "w-[63px]"], ["email", "w-12"], ["Titel", "w-11"],
  ["Vorteile", "w-[60px]"], ["Kartentyp", "w-[194px]"], ["Kartentext", "w-[76px]"], ["Versand-Eigenschaft", "pl-1.5"],
];
const CARD_TYPES = [
  "Workshop Card", "Workshop Card", "Workshop Card", "STUDENT Workshop Card",
  "Workshop Card", "Workshop Card", "Festival Card", "Workshop Card",
];

const TreeBox = ({ open }) => (
  <svg viewBox="0 0 9 9" className="block size-[9px] shrink-0" aria-hidden="true">
    <rect x=".5" y=".5" width="8" height="8" fill="#e6ecf6" stroke="#5a6e94" />
    <path d={open ? "M2 4.500h5" : "M2 4.500h5M4.500 2v5"} stroke="#16284e" />
  </svg>
);

const SourceTree = () => (
  <div className="flex w-[237px] shrink-0 flex-col border-2 border-t-[#606060] border-b-[#c9c2be] border-r-[#c9c2be] border-l-0 bg-white pl-[11px] pt-1">
    {[["Bibliography", false], ["kundenkarten_neu", true]].map(([label, open]) => (
      <div key={label} className="flex h-[17px] items-center">
        <TreeBox open={open} />
        <span className="h-px w-1 bg-[#ccc]" />
        <Icon name="base" />
        <span className={`pl-1 ${open ? "font-bold" : ""}`}>{label}</span>
      </div>
    ))}
    <div className="flex h-[17px] items-center pl-[17px]">
      <TreeBox />
      <span className="h-px w-[7px] bg-[#ccc]" />
      <Icon name="queries" />
      <span className="pl-1">Abfragen</span>
    </div>
    <div className="flex h-[17px] items-center pl-[17px]">
      <TreeBox open />
      <span className="h-px w-[7px] bg-[#ccc]" />
      <Icon name="tables" />
      <span className="pl-1 font-bold">Tabellen</span>
    </div>
    <div className="flex h-[17px] items-center pl-[41px]">
      <span className="mb-2 h-2 w-3 border-b border-l border-[#ccc]" />
      <Icon name="tbl" />
      <span className="ml-1 bg-[#0a246a] font-bold leading-[17px] text-white">Tabelle1</span>
    </div>
  </div>
);

const Thumb = ({ className, children, label }) => (
  <button aria-label={label} className={`flex shrink-0 items-center justify-center ${RAISED} ${className}`}>{children}</button>
);

const DataGrid = () => (
  <div className="flex min-w-0 flex-1 flex-col border border-t-2 border-black">
    <div className="relative min-h-0 flex-1 overflow-hidden">
      <table className="w-full table-fixed border-collapse bg-white">
        <thead>
          <tr className="h-[17px] bg-[#dad3cf]">
            <th className="w-[23px] border-b border-r border-black" aria-label="Zeile" />
            {COLUMNS.map(([name, w]) => (
              <th key={name} className={`whitespace-nowrap border-b border-r border-black p-0 font-normal leading-4 last:border-r-0 ${w}`}>
                {name}
              </th>
            ))}
          </tr>
        </thead>
        <tbody>
          {CARD_TYPES.map((type, r) => (
            <tr key={r} className="h-[15px]">
              <td className="border-b border-r border-black bg-[#dad3cf] p-0">
                {r === 3 && (
                  <svg viewBox="0 0 7 9" className="ml-[9px] block h-[9px] w-[7px]" aria-hidden="true">
                    <path d="M.5.500v8l6-4z" fill="#8adc20" stroke="#2c6a10" />
                  </svg>
                )}
              </td>
              {COLUMNS.map(([name]) => (
                <td key={name} className="whitespace-nowrap border-b border-r border-[#c0c0c0] p-0 pl-px leading-[14px]">
                  {name === "Kartentyp" ? type : ""}
                </td>
              ))}
            </tr>
          ))}
        </tbody>
      </table>
      <div className="absolute bottom-0 right-0 top-[17px] flex w-4 flex-col bg-[#ece6e6]">
        <Thumb label="Nach oben" className="h-[15px]"><Triangle dir="up" className="fill-[#888]" /></Thumb>
        <Thumb label="Position" className="h-[25px]" />
        <Thumb label="Nach unten" className="mt-auto h-[14px]"><Triangle /></Thumb>
      </div>
    </div>
    <div className="flex h-4 shrink-0 bg-[#dad3cf]">
      <div className="flex w-[328px] shrink-0 items-center border-t border-black">
        <label htmlFor="rec" className="w-[52px] shrink-0">Datensatz</label>
        <input id="rec" defaultValue="4" className="h-full w-[51px] border-x border-black bg-white outline-none" />
        <span className="w-[59px] pl-1">von</span>
        <span className="w-[65px] pl-2">21</span>
        <div className="flex h-full gap-px">
          {[["Erster", "|<"], ["Voriger", "<"], ["Nächster", ">"], ["Letzter", ">|"], ["Neu", ""]].map(([l, g]) => (
            <Thumb key={l} label={l} className="w-[15px]">
              {g[0] === "|" && <span className="h-2 w-0.5 bg-black" />}
              {g.includes("<") && <Triangle dir="left" />}
              {g.includes(">") && <Triangle dir="right" />}
              {g[1] === "|" && <span className="h-2 w-0.5 bg-black" />}
            </Thumb>
          ))}
        </div>
      </div>
      <div className="flex min-w-0 flex-1 bg-[#ece6e6]">
        <Thumb label="Nach links" className="w-[15px]"><Triangle dir="left" /></Thumb>
        <span className="w-[142px] shrink-0" />
        <Thumb label="Spalten" className="w-[311px]" />
        <Thumb label="Nach rechts" className="ml-auto w-[14px]"><Triangle dir="right" /></Thumb>
      </div>
      <span className="w-4 shrink-0 border-l border-[#606060]" />
    </div>
  </div>
);

const RULER = [1, 2, 3, 4, 5, 6, 7, 8];

const DocumentArea = () => (
  <div className="flex min-h-0 flex-1 bg-[#f7f7f7]">
    <svg className="h-full w-[22px] shrink-0" aria-hidden="true">
      <rect width="22" height="600" fill="#f5f3f5" />
      <rect x="4" y="44" width="16" height="209" fill="#fff" />
      {RULER.slice(0, 6).map((n) => (
        <path key={n} d={`M14 ${44 + n * 38}h2M14 14h2`} stroke="#444" strokeWidth="2" />
      ))}
    </svg>
    <div className="flex flex-col pl-[72px]">
      <svg viewBox="0 0 350 28" className="h-7 w-[350px] font-['DejaVu_Sans_Condensed','DejaVu_Sans',sans-serif] text-[11px]" role="img" aria-label="Lineal">
        <rect x="14" y="4" width="321" height="16" fill="#fff" />
        {RULER.map((n) => (
          <g key={n}>
            <text x={14 + n * 37.75} y="15" textAnchor="middle" fill="#333">{n}</text>
            {[9.500, 28.500].map((o) => (
              <rect key={o} x={14 + (n - 1) * 37.750 + o} y="11" width="1" height="1" fill="#555" />
            ))}
            <rect x={14 + (n - 1) * 37.750 + 19} y="10" width="1" height="3" fill="#777" />
          </g>
        ))}
        {[1, 2, 3, 4, 5, 6].map((n) => (
          <path key={n} d={`M${12 + n * 47} 19.500h5M${14.500 + n * 47} 17v3`} stroke="#333" />
        ))}
        <path d="M9.500 3.500h10v3l-5 5-5-5zM9.500 20.500h10v-3l-5-5-5 5z" fill="#fff" stroke="#333" />
        <path d="M330.500 20.500h10v-3l-5-5-5 5z" fill="#fff" stroke="#333" />
      </svg>
      <div className="relative mt-[15px] h-[210px] w-[350px] pl-[13px] pr-[14px]">
        <svg viewBox="0 0 350 236" className="absolute -top-[13px] left-0 h-[236px] w-[350px]" aria-hidden="true">
          <path d="M14.500 0v13M14.500 222v14M335.500 0v13M335.500 222v14M1 13.500h13M336 13.500h13M1 221.500h13M336 221.500h13" stroke="#b4b4b4" />
        </svg>
        <div className="relative h-[210px] border border-[#c0c0c0] border-b-[#a8a8a8] bg-white shadow-[0_2px_4px_#bbb]">
          <div className="flex h-[19px] items-center border border-t-2 border-[#c4c4c4] font-['Liberation_Serif',serif] text-[16px] leading-[17px]">
            <span className="whitespace-pre">7 </span>
            <span className="bg-[#c0c0c0]">STUDENT Workshop Card</span>
          </div>
        </div>
      </div>
    </div>
  </div>
);

const Cell = ({ className, children }) => (
  <div className="flex shrink-0 items-center">
    <span className="h-4 w-px bg-[#777]" />
    <span className="h-4 w-px bg-white" />
    <div className={`flex items-center whitespace-nowrap ${className}`}>{children}</div>
  </div>
);

const StatusBar = () => (
  <div className="flex h-[23px] shrink-0 items-center overflow-hidden border-t border-[#777] bg-[#dad3cf]">
    <div className="w-[139px] shrink-0 pl-[10px]">Seite 1 / 1</div>
    <Cell className="w-[130px] pl-[3px]">Wörter: 2</Cell>
    <Cell className="w-[127px] pl-[3px]">Standard</Cell>
    <Cell className="w-[192px] justify-center pr-2">Deutsch (Deutschland)</Cell>
    <Cell className="w-[65px]" />
    <Cell className="w-7 pl-[5px]">
      <svg viewBox="0 0 14 10" className="h-2.5 w-3.5" aria-hidden="true"><path d="M0 0h10v7H0z" fill="#888" /><path d="M12.500 0v10" stroke="#888" /></svg>
    </Cell>
    <Cell className="w-[27px] pl-[5px]">
      <svg viewBox="0 0 12 10" className="h-2.5 w-3" aria-hidden="true"><path d="M1 1h8v8H1z" fill="none" stroke="#888" /><path d="M6 3h5M8.500 1v4" stroke="#c02020" strokeWidth="1.500" /></svg>
    </Cell>
    <Cell className="w-[27px]" />
    <Cell className="w-[179px] justify-center pr-1">WorkshopCard</Cell>
    <Cell className="w-[74px] gap-[6px] pl-2">
      <span className="h-2.5 w-2 border border-[#888]" />
      <span className="flex gap-0.5"><i className="h-2.5 w-2 border border-[#444]" /><i className="h-2.5 w-2 border border-[#444]" /></span>
      <span className="flex"><i className="h-2.5 w-2 border border-[#888]" /><i className="h-2.5 w-2 border border-[#888]" /></span>
    </Cell>
    <Cell className="w-[140px] gap-[6px] pl-[5px] text-[#777]">
      <span className="h-0.5 w-2 bg-[#888]" />
      <span className="flex h-2 w-[97px] items-center"><i className="h-0.5 w-[46px] bg-[#888]" /><i className="size-2 rounded-full border border-[#777] bg-white" /><i className="h-0.5 flex-1 bg-[#888]" /></span>
      <svg viewBox="0 0 8 8" className="size-2" aria-hidden="true"><path d="M0 4h8M4 0v8" stroke="#777" strokeWidth="2" /></svg>
    </Cell>
    <Cell className="pl-[3px]">100%</Cell>
  </div>
);

const WriterWindow = () => (
  <section className="absolute bottom-[2px] left-[252px] right-1 top-0 flex flex-col border-b-2 border-l-2 border-r-2 border-b-[#404040] border-l-[#dad3cf] border-r-[#404040] bg-[#dad3cf] pl-[2px] pr-[2px] shadow-[inset_1px_0_0_#fff]">
    <div className="flex h-[3px] shrink-0 gap-2 bg-[#808080] pl-1">
      <span className="w-3 bg-[#9cc4d4]" />
      <span className="ml-auto h-px w-8 bg-[#404040]" />
      <span className="h-px w-4 bg-[#404040]" />
    </div>
    <div className="shrink-0 border-b border-[#808080] bg-linear-to-r from-[#dad3cf] via-[#f6f2f3] via-65% to-[#fdfbfd] to-85%">
      <nav className="flex h-[21px] items-center gap-[11px] pl-[5px]">
        {MENUS.map(([t, k]) => (
          <button key={t}><Key text={t} k={k} /></button>
        ))}
        <button aria-label="Update" className="ml-auto mr-[10px]"><Icon name="update" className="h-3.5 w-4" /></button>
        <button aria-label="Dokument schließen" className="mr-[6px]"><CloseX className="size-[9px]" /></button>
      </nav>
      <div className={TOOLBAR}>
        <span className="ml-1 mr-[5px] h-[18px] border-l-2 border-dotted border-[#777]" />
        <Tools items={TB_STANDARD} />
        <span className="w-1" />
      </div>
      <div className={TOOLBAR}>
        <span className="ml-[11px] flex w-[32px] pl-1"><Icon name="styles" /></span>
        <Combo label="Vorlage" value="Standard" className="h-[19px] w-[118px]" />
        <Combo label="Schriftart" value="Times New Roman" className="ml-[9px] h-[19px] w-[132px]" />
        <Combo label="Schriftgrad" value="12" className="ml-[9px] mr-2 h-[19px] w-[52px]" />
        <Tools items={TB_FORMAT} />
        <span className="w-1" />
      </div>
    </div>
    <div className="shrink-0 border-b border-r border-[#808080] bg-linear-to-r from-[#dad3cf] via-[#f6f2f3] via-65% to-[#fdfbfd] to-85%">
      <div className={TOOLBAR}>
        <span className="w-[13px]" />
        <Tools items={TB_DATA} />
        <span className="w-1" />
      </div>
    </div>
    <div className="flex h-[148px] shrink-0 gap-[7px] pt-[2px]">
      <SourceTree />
      <DataGrid />
    </div>
    <div className="flex h-2 shrink-0 flex-col justify-center border-b border-[#8a8486]"><span className="h-px bg-white" /></div>
    <DocumentArea />
    <StatusBar />
  </section>
);

/* ---------- navigator ---------- */

const NAV_TREE = [
  ["Überschriften", "tHeading"], ["Tabellen", "tTable"], ["Textrahmen", "tFrame"], ["Bilder", "tImage"],
  ["OLE-Objekte", "tOle"], ["Textmarken", "tPin"], ["Bereiche", "tSection"],
  ["DanceCard"], ["FestivalCard"], ["PerformanceCard"], ["STFestivalCard"], ["STPerformanceCard"],
  ["WorkshopCard"], ["STWorkshopCard"], ["Hyperlinks", "tLink"], ["Referenzen", "tRef"],
  ["Verzeichnisse", "tIndex"], ["Kommentare", "tNote"], ["Zeichenobjekte", "tDraw"],
];
const sectionColor = (label) =>
  label === "STPerformanceCard" ? "bg-[#0a246a] text-[#d8dcec]" : label === "STWorkshopCard" ? "" : "text-[#c0c0c0]";

const Navigator = () => (
  <section className="absolute -left-1 top-[56px] flex h-[621px] w-[274px] flex-col border-2 border-b-[#404040] border-l-[#dad3cf] border-r-[#404040] border-t-white bg-[#dad3cf] px-[2px] pt-[2px]">
    <header className="flex h-[17px] shrink-0 items-center justify-between bg-[#808080] pr-[2px] font-bold text-[#dad3cf]">
      <h2>Navigator</h2>
      <button aria-label="Navigator schließen" className={`flex h-[13px] w-3 items-center justify-center ${RAISED}`}><CloseX className="size-1.5" /></button>
    </header>
    <div className="mt-[5px] flex h-[22px] shrink-0 items-center">
      <Tools items={["hand", "navCircle", "v", "prev", "next"]} />
      <div className={`ml-[9px] mr-[10px] flex h-[21px] w-[45px] ${SUNKEN}`}>
        <input aria-label="Seite" defaultValue="1" className="min-w-0 flex-1 pl-0.5 outline-none" />
        <span className="flex w-[15px] flex-col">
          <Thumb label="Mehr" className="flex-1"><Triangle dir="up" size="h-[2px] w-1" /></Thumb>
          <Thumb label="Weniger" className="flex-1"><Triangle size="h-[2px] w-1" /></Thumb>
        </span>
      </div>
      <Tools items={["drag", "v", "|", "levelUp", "levelDown"]} />
    </div>
    <div className="mt-[3px] flex h-[22px] shrink-0 items-center">
      <Tools items={["*listBox", "content", "|", "reminder", "|", "header", "footer", "anchor", "|", "headings", "v", "|", "promote", "demote"]} />
    </div>
    <ul className={`mr-[6px] mt-[2px] flex-1 ${SUNKEN}`}>
      {NAV_TREE.map(([label, icon]) => (
        <li key={label} className="flex h-4 items-center">
          {icon ? (
            <>
              <span className="flex w-6 justify-center">{label === "Bereiche" && <TreeBox open />}</span>
              <Icon name={icon} />
              <span className="pl-1">{label}</span>
            </>
          ) : (
            <span className={`ml-[42px] leading-4 ${sectionColor(label)}`}>{label}</span>
          )}
        </li>
      ))}
    </ul>
    <Combo label="Dokument" value="sb_cards_TEST (aktiv)" className="mb-[6px] mr-[6px] mt-[6px] h-[21px]" />
  </section>
);

/* ---------- wizard ---------- */

const STEPS = [
  "Ausgangsdokument wählen", "Dokumenttyp wählen", "Adressblock einfügen", "Briefanrede erstellen",
  "Layout anpassen", "Dokument vorbereiten", "Dokument personalisieren", "Speichern, drucken, versenden",
];

const TITLE = "font-['DejaVu_Sans_Condensed','Noto_Sans',sans-serif] font-bold";

const DlgButton = ({ children, className = "w-[89px]", isDefault, ...rest }) => (
  <button
    className={`flex shrink-0 items-center justify-center whitespace-nowrap disabled:text-[#8c8684] ${RAISED} ${isDefault ? "outline outline-1 -outline-offset-1 outline-[#404040]" : ""} ${className}`}
    {...rest}
  >
    {children}
  </button>
);

const Wizard = () => (
  <section role="dialog" aria-label="Serienbrief-Assistent" className="absolute left-[759px] top-[256px] flex h-[468px] w-[619px] flex-col border-2 border-b-[#505050] border-l-[#dad3cf] border-r-[#505050] border-t-[#ece8e6] bg-[#dad3cf] pt-px font-['Liberation_Sans',sans-serif] shadow-[inset_-1px_-1px_0_#808080]">
    <header className={`flex h-[18px] shrink-0 items-center justify-between bg-[#0a246a] pl-[2px] pr-[3px] text-white ${TITLE}`}>
      <h2>Serienbrief-Assistent</h2>
      <button aria-label="Schließen" className={`flex h-[14px] w-4 items-center justify-center ${RAISED}`}><CloseX /></button>
    </header>
    <div className="flex min-h-0 flex-1">
      <aside className="w-[154px] shrink-0 border-r-2 border-[#8c8886] bg-white pl-2 pt-[9px] leading-[13px]">
        <div className="border-t border-black" />
        <h3 className={`mt-[5px] underline underline-offset-2 ${TITLE}`}>Schritte</h3>
        <ol className="mt-[18px] flex flex-col items-start gap-2">
          {STEPS.map((s, i) => (
            <li key={s} className={`flex pr-0.5 ${i === 4 ? "text-[#8c8886]" : ""} ${i === 5 ? "bg-[#0a246a] text-white" : ""}`}>
              <span className="w-3 shrink-0 whitespace-nowrap">{i + 1}.</span>
              <span className={i === 0 || i === 7 ? "w-[110px]" : "whitespace-nowrap"}>{s}</span>
            </li>
          ))}
        </ol>
      </aside>
      <div className="flex min-w-0 flex-1 flex-col pl-2 pr-[11px] pt-[15px] leading-[13px]">
        <h3 className={`whitespace-nowrap ${TITLE}`}>Kontrollieren Sie das Dokument und ändern Sie es falls notwendig</h3>
        <p className="mt-[18px] whitespace-nowrap">
          Sie sehen jetzt eine Vorschau auf ein Serienbriefdokument. Um eine Vorschau auf weitere
          <br />
          Dokumente zu sehen, klicken Sie auf die Pfeile.
        </p>
        <div className="mt-[17px] flex h-6 items-center pl-[10px]">
          <label htmlFor="rcpt" className="w-[113px]"><Key text="Empfänger" k="E" /></label>
          <DlgButton className="h-6 w-9" aria-label="Erster">|&lt;</DlgButton>
          <DlgButton className="ml-[5px] h-6 w-9" aria-label="Voriger">&lt;</DlgButton>
          <input id="rcpt" defaultValue="4" className={`ml-[5px] h-5 w-9 pl-px outline-none ${SUNKEN}`} />
          <DlgButton className="ml-[5px] h-6 w-9" isDefault aria-label="Nächster">
            <span className="border border-dotted border-black px-px">&gt;</span>
          </DlgButton>
          <DlgButton className="ml-[4px] h-6 w-9" aria-label="Letzter">&gt;|</DlgButton>
        </div>
        <div className="mt-[13px] flex h-[13px] items-center pl-[123px]">
          <input id="excl" type="checkbox" className={`size-[13px] shrink-0 appearance-none ${SUNKEN}`} />
          <label htmlFor="excl" className="whitespace-nowrap pl-[3px]"><Key text="Diesen Empfänger ausschließen" k="D" /></label>
        </div>
        <div className="mt-[26px] flex items-center gap-[5px] whitespace-nowrap">
          <h4>Dokument bearbeiten</h4>
          <span className="h-[2px] flex-1 border-b border-t border-b-white border-t-[#808080]" />
        </div>
        <div className="mt-[22px] flex flex-col gap-[13px] whitespace-nowrap pl-[10px]">
          <p>
            Sie können jetzt das Dokument erstellen oder bearbeiten. Die Veränderungen wirken sich
            <br />
            auf alle Serienbriefdokumente aus.
          </p>
          <p>
            Ein Klick auf die Schaltfläche 'Dokument bearbeiten...' schließt vorübergehend den
            <br />
            Assistenten. Durch Klicken der 'Zurück zum Seriendruck-Assistenten'-Schaltfläche -
            <br />
            sichtbar in einem kleinen Fenster - gelangen Sie zurück zum Assistenten.
          </p>
        </div>
        <DlgButton className="mt-[23px] h-6 w-[142px] self-center"><Key text="Dokument bearbeiten..." k="b" /></DlgButton>
      </div>
    </div>
    <footer className="flex h-[38px] shrink-0 items-center border-t border-[#808080] pl-3 pr-3 shadow-[inset_0_1px_0_#fff]">
      <DlgButton className="mr-auto h-[23px] w-[89px]"><Key text="Hilfe" k="H" /></DlgButton>
      <DlgButton className="h-[23px] w-[89px]"><Key text="<< Zurück" k="Z" /></DlgButton>
      <DlgButton className="ml-1 h-[23px] w-[89px]" isDefault><Key text="Weiter >>" k="W" /></DlgButton>
      <DlgButton className="ml-[6px] h-[23px] w-[89px]" disabled>Fertigstellen</DlgButton>
      <DlgButton className="ml-[6px] h-[23px] w-[89px]">Abbrechen</DlgButton>
    </footer>
  </section>
);

export default function App() {
  return (
    <main className="relative h-screen min-h-[740px] w-full overflow-hidden bg-[#3a6ea5] font-['DejaVu_Sans_Condensed','Noto_Sans',sans-serif] text-[11px] leading-[15px] text-black">
      <Desktop />
      <WriterWindow />
      <Navigator />
      <Wizard />
    </main>
  );
}
